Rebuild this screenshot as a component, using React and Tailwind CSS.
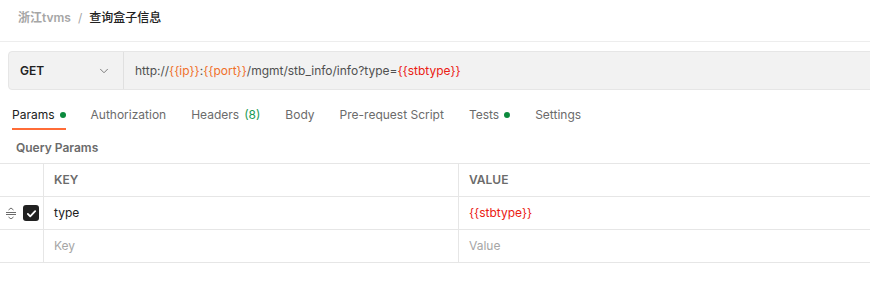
import { ChevronDown } from 'lucide-react';

const font = { fontFamily: 'Inter, "Noto Sans CJK SC", sans-serif' };

function Dot() {
  return <span className="inline-block w-[6px] h-[6px] rounded-full bg-[#0b8a3d] ml-[5px]" />;
}

function Tab({ label, active, dot, count }) {
  return (
    <div className="relative flex items-center h-[30px]">
      <span className={active ? 'text-[#212121]' : 'text-[#6b6b6b]'}>{label}</span>
      {count && <span className="ml-[5px] text-[#1a9c55]">{count}</span>}
      {dot && <Dot />}
      {active && <span className="absolute left-0 right-0 bottom-0 h-[2px] bg-[#ff6c37]" />}
    </div>
  );
}

function DragHandle() {
  return (
    <svg width="12" height="12" viewBox="0 0 12 12" fill="none" stroke="#6b6b6b" strokeWidth="1">
      <path d="M1 5.5h10M1 7.5h10" />
      <path d="M3.5 3l2.5-2 2.5 2M3.5 10l2.5 2 2.5-2" />
    </svg>
  );
}

function Checkbox() {
  return (
    <span className="flex items-center justify-center w-[16px] h-[16px] rounded-[3px] bg-[#212121]">
      <svg width="11" height="11" viewBox="0 0 12 12" fill="none" stroke="#fff" strokeWidth="2" strokeLinecap="round" strokeLinejoin="round">
        <path d="M2 6.5l2.6 2.6L10 3.5" />
      </svg>
    </span>
  );
}

export default function App() {
  return (
    <div className="w-[870px] h-[281px] overflow-hidden bg-white text-[12px]" style={font}>
      <div className="h-[42px] flex items-center pb-[6px] px-[18px] border-b border-[#ededed]">
        <span className="font-semibold text-[#a6a6a6]">浙江tvms</span>
        <span className="mx-[7px] text-[#a6a6a6]">/</span>
        <span className="font-medium text-[#212121]">查询盒子信息</span>
      </div>

      <div className="mt-[9px] ml-[8px] w-[900px] h-[39px] flex bg-[#f2f2f2] border border-[#e6e6e6] rounded-l-[4px]">
        <div className="w-[115px] flex items-center justify-between pl-[11px] pr-[12px] border-r border-[#e0e0e0]">
          <span className="font-semibold text-[#212121]">GET</span>
          <ChevronDown size={14} strokeWidth={1.5} className="text-[#6b6b6b]" />
        </div>
        <div className="flex items-center pl-[11px] text-[#505050]">
          <span>http://</span>
          <span className="text-[#f0702a]">{'{{ip}}'}</span>
          <span>:</span>
          <span className="text-[#f0702a]">{'{{port}}'}</span>
          <span>/mgmt/stb_info/info?type=</span>
          <span className="text-[#eb2013]">{'{{stbtype}}'}</span>
        </div>
      </div>

      <div className="mt-[10px] flex gap-[25px] pl-[12px]">
        <Tab label="Params" active dot />
        <Tab label="Authorization" />
        <Tab label="Headers" count="(8)" />
        <Tab label="Body" />
        <Tab label="Pre-request Script" />
        <Tab label="Tests" dot />
        <Tab label="Settings" />
      </div>

      <div className="h-[33px] flex items-center pl-[16px] pt-[2px] text-[12px] font-semibold text-[#6b6b6b]">
        Query Params
      </div>

      <div className="w-[900px] border-t border-[#e6e6e6]">
        <div className="h-[33px] flex border-b border-[#e6e6e6] font-semibold text-[#6b6b6b]">
          <div className="w-[44px] border-r border-[#e6e6e6]" />
          <div className="w-[415px] flex items-center pl-[10px] border-r border-[#e6e6e6]">KEY</div>
          <div className="flex-1 flex items-center pl-[10px]">VALUE</div>
        </div>
        <div className="h-[33px] flex border-b border-[#e6e6e6]">
          <div className="w-[44px] flex items-center pl-[5px] gap-[6px] border-r border-[#e6e6e6]">
            <DragHandle />
            <Checkbox />
          </div>
          <div className="w-[415px] flex items-center pl-[10px] border-r border-[#e6e6e6] text-[#212121]">type</div>
          <div className="flex-1 flex items-center pl-[10px] text-[#eb2013]">{'{{stbtype}}'}</div>
        </div>
        <div className="h-[33px] flex border-b border-[#e6e6e6] text-[#a6a6a6]">
          <div className="w-[44px] border-r border-[#e6e6e6]" />
          <div className="w-[415px] flex items-center pl-[10px] border-r border-[#e6e6e6]">Key</div>
          <div className="flex-1 flex items-center pl-[10px]">Value</div>
        </div>
      </div>
    </div>
  );
}
